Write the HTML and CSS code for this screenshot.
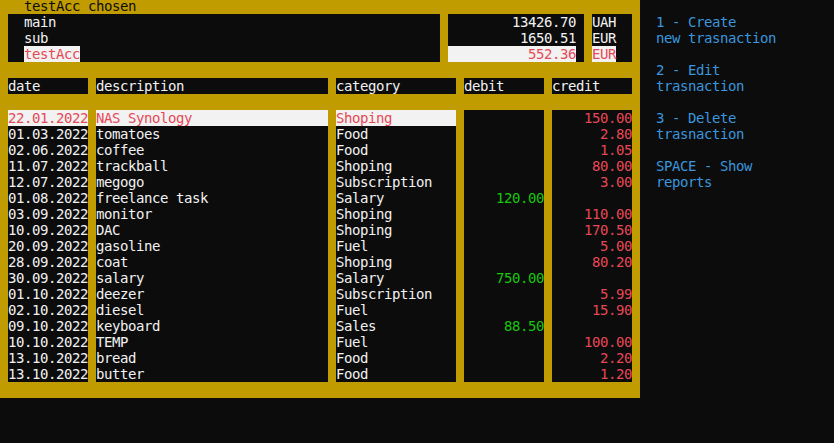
FILE: index.html
```html
<!DOCTYPE html>
<html>
<head>
<meta charset="utf-8">
<link rel="stylesheet" href="styles.css">
</head>
<body>
<div class="screen">
  <div class="panel">
    <div class="title">testAcc chosen</div>
    <div class="accounts">
      <div class="box names">
        <div>main</div>
        <div>sub</div>
        <div><span class="sel">testAcc</span></div>
      </div>
      <div class="box balances">
        <div>13426.70</div>
        <div>1650.51</div>
        <div class="sel">552.36</div>
      </div>
      <div class="box currencies">
        <div>UAH</div>
        <div>EUR</div>
        <div><span class="sel">EUR</span></div>
      </div>
    </div>
    <div class="table">
      <div class="col c-date">
        <div class="box head">date</div>
        <div class="box body">
          <div class="sel">22.01.2022</div>
          <div>01.03.2022</div>
          <div>02.06.2022</div>
          <div>11.07.2022</div>
          <div>12.07.2022</div>
          <div>01.08.2022</div>
          <div>03.09.2022</div>
          <div>10.09.2022</div>
          <div>20.09.2022</div>
          <div>28.09.2022</div>
          <div>30.09.2022</div>
          <div>01.10.2022</div>
          <div>02.10.2022</div>
          <div>09.10.2022</div>
          <div>10.10.2022</div>
          <div>13.10.2022</div>
          <div>13.10.2022</div>
        </div>
      </div>
      <div class="col c-desc">
        <div class="box head">description</div>
        <div class="box body">
          <div class="sel">NAS Synology</div>
          <div>tomatoes</div>
          <div>coffee</div>
          <div>trackball</div>
          <div>megogo</div>
          <div>freelance task</div>
          <div>monitor</div>
          <div>DAC</div>
          <div>gasoline</div>
          <div>coat</div>
          <div>salary</div>
          <div>deezer</div>
          <div>diesel</div>
          <div>keyboard</div>
          <div>TEMP</div>
          <div>bread</div>
          <div>butter</div>
        </div>
      </div>
      <div class="col c-cat">
        <div class="box head">category</div>
        <div class="box body">
          <div class="sel">Shoping</div>
          <div>Food</div>
          <div>Food</div>
          <div>Shoping</div>
          <div>Subscription</div>
          <div>Salary</div>
          <div>Shoping</div>
          <div>Shoping</div>
          <div>Fuel</div>
          <div>Shoping</div>
          <div>Salary</div>
          <div>Subscription</div>
          <div>Fuel</div>
          <div>Sales</div>
          <div>Fuel</div>
          <div>Food</div>
          <div>Food</div>
        </div>
      </div>
      <div class="col c-debit">
        <div class="box head">debit</div>
        <div class="box body num debit">
          <div></div>
          <div></div>
          <div></div>
          <div></div>
          <div></div>
          <div>120.00</div>
          <div></div>
          <div></div>
          <div></div>
          <div></div>
          <div>750.00</div>
          <div></div>
          <div></div>
          <div>88.50</div>
          <div></div>
          <div></div>
          <div></div>
        </div>
      </div>
      <div class="col c-credit">
        <div class="box head">credit</div>
        <div class="box body num credit">
          <div>150.00</div>
          <div>2.80</div>
          <div>1.05</div>
          <div>80.00</div>
          <div>3.00</div>
          <div></div>
          <div>110.00</div>
          <div>170.50</div>
          <div>5.00</div>
          <div>80.20</div>
          <div></div>
          <div>5.99</div>
          <div>15.90</div>
          <div></div>
          <div>100.00</div>
          <div>2.20</div>
          <div>1.20</div>
        </div>
      </div>
    </div>
  </div>
  <div class="help">
    <div></div>
    <div>1 - Create</div>
    <div>new trasnaction</div>
    <div></div>
    <div>2 - Edit</div>
    <div>trasnaction</div>
    <div></div>
    <div>3 - Delete</div>
    <div>trasnaction</div>
    <div></div>
    <div>SPACE - Show</div>
    <div>reports</div>
  </div>
</div>
</body>
</html>
```

FILE: styles.css
```css
html, body {
  margin: 0;
  padding: 0;
  background: #0c0c0c;
}

body {
  font-family: "DejaVu Sans Mono", "Liberation Mono", monospace;
  font-size: 14px;
  letter-spacing: -0.43px;
  line-height: 16px;
  color: #f2f2f2;
  overflow: hidden;
  height: 443px;
}

.screen {
  display: flex;
  align-items: flex-start;
  margin-top: -2px;
}

.panel {
  width: 640px;
  flex: none;
  box-sizing: border-box;
  background: #c19c00;
  padding: 0 8px 16px 8px;
}

.title {
  height: 16px;
  padding-left: 16px;
  color: #0c0c0c;
  white-space: nowrap;
}

.accounts {
  display: flex;
  gap: 8px;
  height: 48px;
}

.box {
  background: #0c0c0c;
  color: #f2f2f2;
  white-space: nowrap;
}

.names {
  width: 432px;
  box-sizing: border-box;
  padding-left: 16px;
}

.balances {
  width: 136px;
  box-sizing: border-box;
  padding-right: 8px;
  text-align: right;
}

.currencies {
  width: 40px;
}

.accounts .box > div,
.body > div {
  height: 16px;
}

.sel {
  background: #f2f2f2;
  color: #e74856;
}

.table {
  display: flex;
  gap: 8px;
  margin-top: 16px;
}

.col {
  display: flex;
  flex-direction: column;
  gap: 16px;
}

.c-date { width: 80px; }
.c-desc { width: 232px; }
.c-cat { width: 120px; }
.c-debit { width: 80px; }
.c-credit { width: 80px; }

.head {
  height: 16px;
}

.num {
  text-align: right;
}

.debit {
  color: #16c60c;
}

.credit {
  color: #e74856;
}

.help {
  padding-left: 16px;
  color: #3a96dd;
  white-space: nowrap;
}

.help > div {
  height: 16px;
}
```
